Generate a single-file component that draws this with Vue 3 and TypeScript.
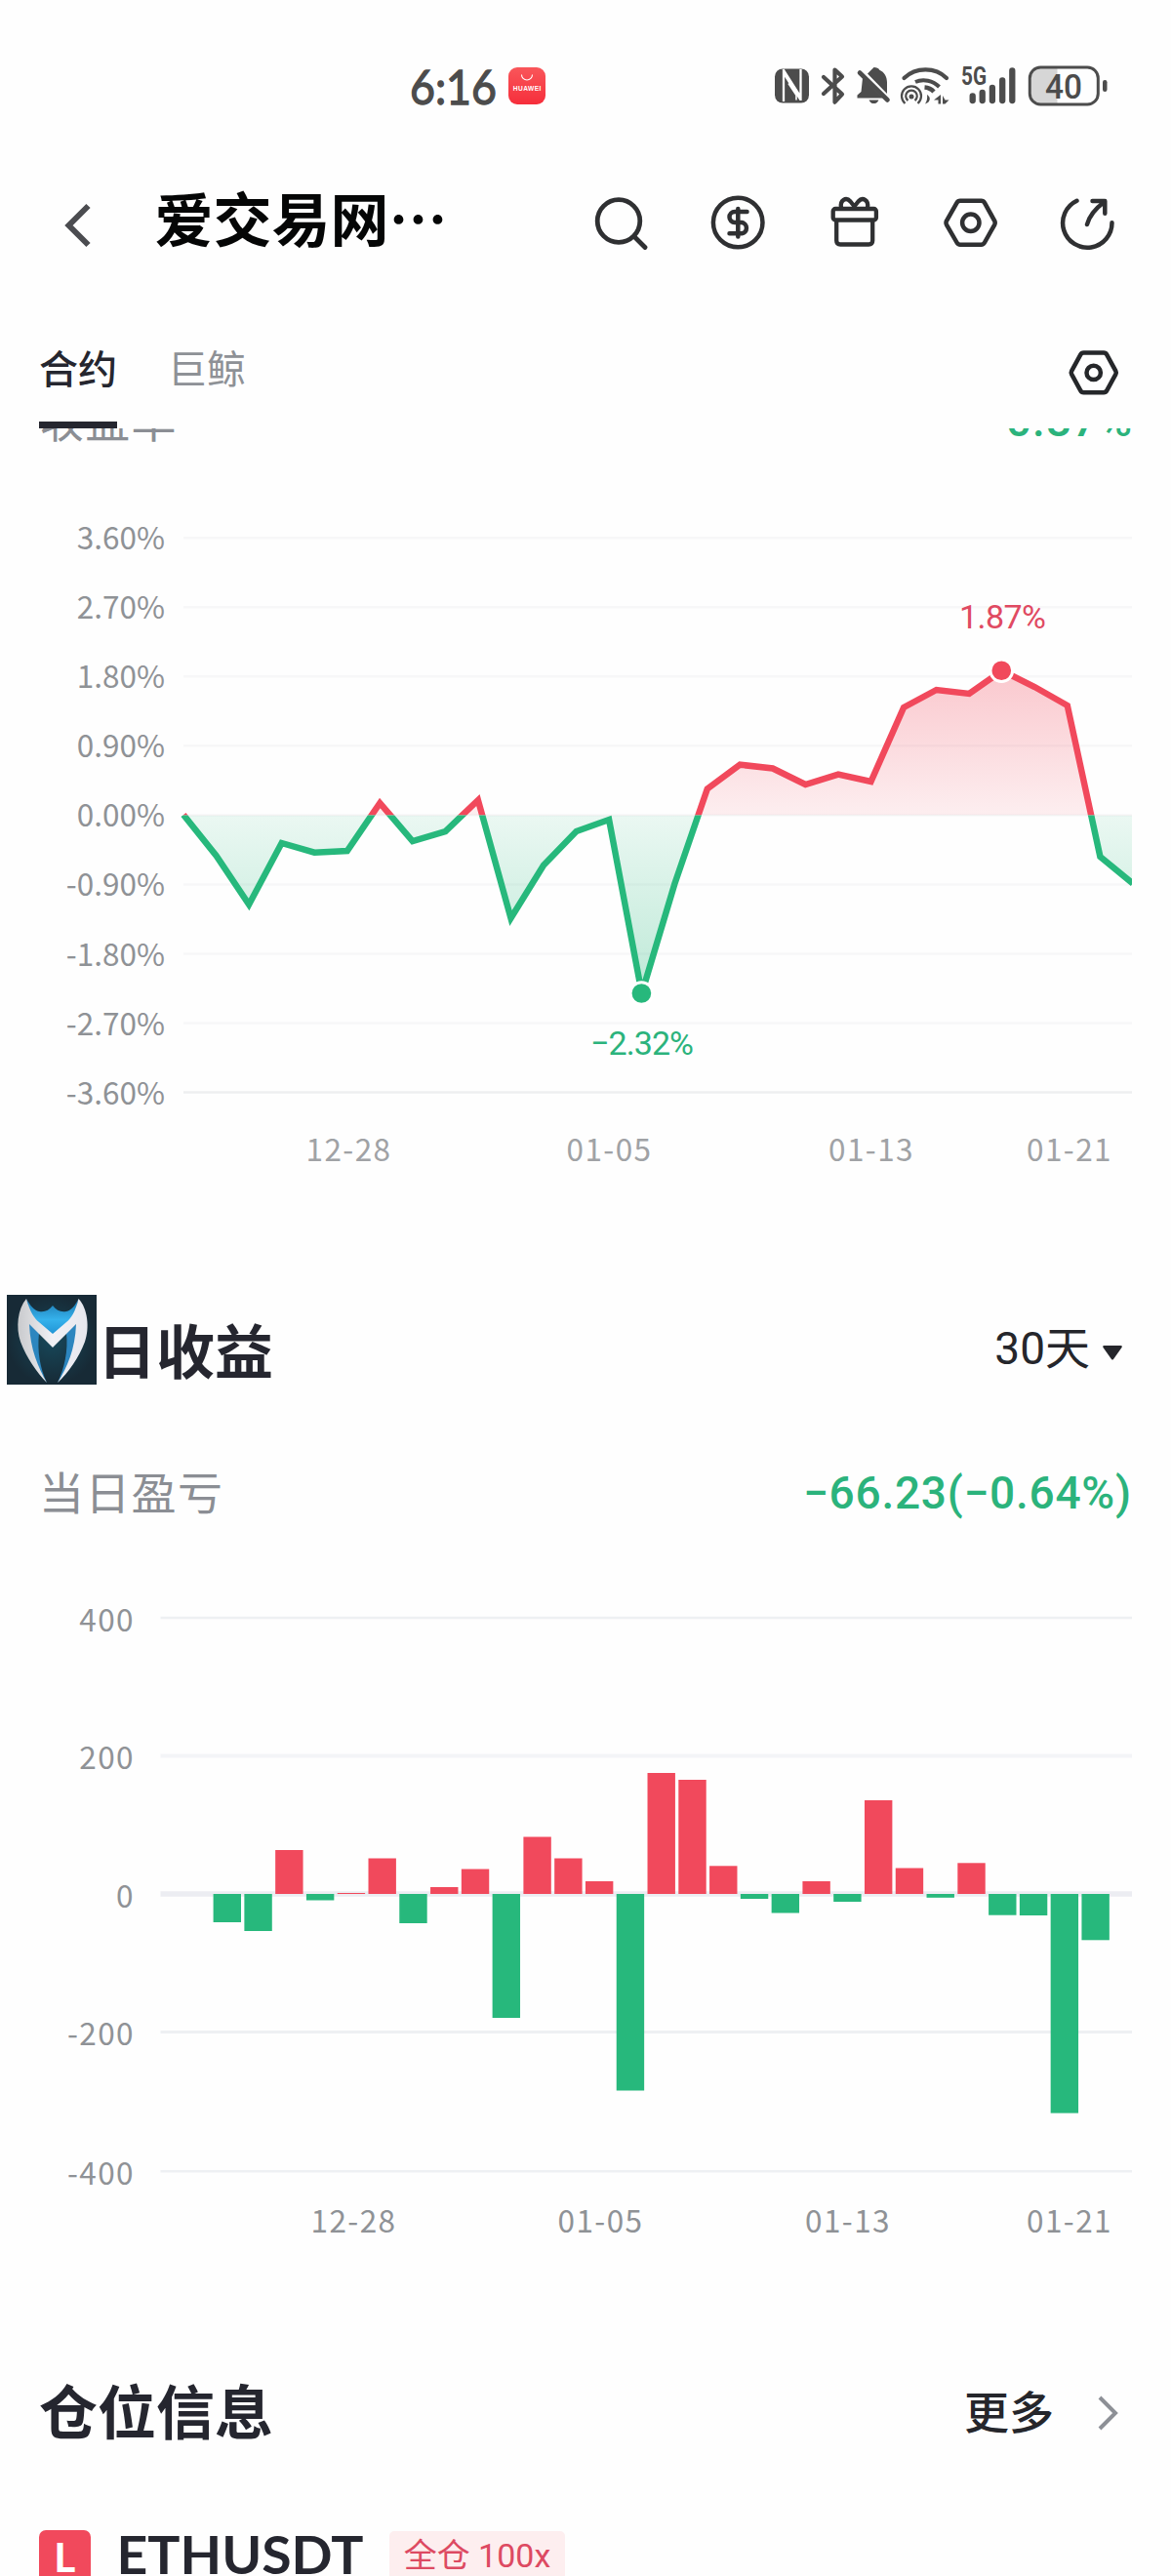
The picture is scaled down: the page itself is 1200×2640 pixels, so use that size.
<script setup lang="ts">
interface Tick { label: string; y: number }
interface DateTick { label: string; x: number }

const RED = '#f1495c'
const GREEN = '#27b87c'

const yieldZero = 835.4
const yieldTicks: Tick[] = ['3.60%', '2.70%', '1.80%', '0.90%', '0.00%', '-0.90%', '-1.80%', '-2.70%', '-3.60%']
  .map((label, i) => ({ label, y: 551.2 + i * 71.05 }))
const yieldDates: DateTick[] = [
  { label: '12-28', x: 357.5 },
  { label: '01-05', x: 624.5 },
  { label: '01-13', x: 893 },
  { label: '01-21', x: 1096 },
]
const yieldY = [835, 877, 927, 864, 873.7, 872, 823, 862, 852, 820, 941, 886.7, 852, 840, 1018, 906,
  808.5, 783.7, 787.5, 804, 793.6, 801, 725, 707, 711, 687.3, 704, 723, 878, 905.5]
const yieldPoints = yieldY.map((y, i) => `${(188 + i * 33.55).toFixed(1)},${y}`).join(' ')
const yieldArea = `188,${yieldZero} ${yieldPoints} 1161,${yieldZero}`

const pnlTicks = [
  { label: '400', y: 1658, w: 2.5, color: '#eef0f3' },
  { label: '200', y: 1799.5, w: 4, color: '#f3f4f7' },
  { label: '0', y: 1941, w: 5.5, color: '#ecedf2' },
  { label: '-200', y: 2082.4, w: 3, color: '#eef0f3' },
  { label: '-400', y: 2225.3, w: 2.5, color: '#eef0f3' },
]
const pnlDates: DateTick[] = [
  { label: '12-28', x: 362.5 },
  { label: '01-05', x: 615.5 },
  { label: '01-13', x: 869 },
  { label: '01-21', x: 1096 },
]
const pnlHeights = [-29, -38, 45, -6.5, 1, 36.5, -30, 7, 25.5, -127, 58.5, 36.5, 13, -201.5, 124, 117,
  28.7, -5, -19.5, 13, -8, 96, 26.5, -3.8, 31.7, -21.7, -22, -224.6, -47.3]
const bars = pnlHeights.map((h, i) => ({
  x: 218.6 + i * 31.78,
  y: h > 0 ? 1941 - h : 1941,
  h: Math.abs(h),
  color: h > 0 ? RED : GREEN,
}))
</script>

<template>
  <div class="page">
    <div class="status">
      <div class="status-left">
        <svg class="clock" width="92" height="50" viewBox="419 63 92 50"><text x="420" y="106.500" textLength="89" lengthAdjust="spacingAndGlyphs" font-family="Lato" font-size="49" fill="#4c4c4c" stroke="#4c4c4c" stroke-width="1.300">6:16</text></svg>
        <svg width="38" height="38" viewBox="0 0 38 38">
          <defs><linearGradient id="hw" x1="0" y1="0" x2="0" y2="1"><stop offset="0" stop-color="#f9565a" /><stop offset="1" stop-color="#f62e3b" /></linearGradient></defs>
          <rect width="38" height="38" rx="9" fill="url(#hw)" />
          <path d="M13.500 7.500a5.500 5.500 0 0 0 11 0" fill="none" stroke="#fff" stroke-width="1.100" />
          <text x="4.800" y="24" textLength="28.500" font-family="Liberation Sans" font-weight="700" font-size="6.600" fill="#fff">HUAWEI</text>
        </svg>
      </div>
      <svg width="350" height="50" viewBox="790 63 350 50">
        <rect x="794" y="70.500" width="35" height="35" rx="8" fill="#4c4c4c" />
        <path d="M803 104V75l17.500 27.500M802.500 71l17.500 27.500M820.500 103V71" fill="none" stroke="#fff" stroke-width="2.300" />
        <path d="M808 85.500l8 12v5" fill="none" stroke="#fff" stroke-width="1.600" />
        <g fill="none" stroke="#4c4c4c" stroke-width="4.200" stroke-linecap="round" stroke-linejoin="round">
          <path d="M844 79l19 17.500-7.500 8.200V71.500l7.500 7-19 17.500" />
        </g>
        <path d="M895.500 69c2.800 0 5 1 5.800 2.800 5 2 7.700 7 7.700 12.500V96L889 75.500zM884 80l21 20.500h-26.500v-3l4-3.500zM890.500 102.500h10c-1 2.500-2.800 3.600-5 3.600s-4-1.100-5-3.600z" fill="#4c4c4c" />
        <path d="M881 74.500l28.500 28" stroke="#4c4c4c" stroke-width="4.600" stroke-linecap="round" />
        <g fill="none" stroke="#4c4c4c" stroke-linecap="round">
          <path d="M926.500 80c12-11.500 32-11.500 43.500 0" stroke-width="4.200" />
          <path d="M938 84c8-3.500 18-1.500 24.500 5" stroke-width="4" stroke-linecap="butt" />
          <path d="M947.500 89.500c4 .3 7 1.800 9.500 4.500" stroke-width="4.500" stroke-linecap="butt" />
          <path d="M927.500 106a10 10 0 1 1 13 0" stroke-width="2.200" stroke-linecap="butt" />
          <path d="M930.500 103a5.800 5.800 0 1 1 7 0" stroke-width="2.200" stroke-linecap="butt" />
        </g>
        <circle cx="934" cy="99" r="2.500" fill="#4c4c4c" />
        <path d="M950 97c3 2 4 5 1 8l-3 1.500c2-3 2.500-6 2-9.500zM964 97v9.500h-2.500v-4h-4.500zM966 98v8.500h2.500l4-4h-4z" fill="#4c4c4c" />
        <text x="985" y="87" textLength="26" lengthAdjust="spacingAndGlyphs" font-family="Roboto" font-weight="700" font-size="25" fill="#4c4c4c">5G</text>
        <g stroke="#4c4c4c" stroke-width="6.300" stroke-linecap="round">
          <path d="M996.700 98.500v4.500M1006.700 95v8M1016.900 90v13M1027.200 82.500v20.500M1037.300 72.500v30.500" />
        </g>
        <path d="M1066 69.500h17.500v37H1066a9 9 0 0 1-9-9v-19a9 9 0 0 1 9-9z" fill="#d6d6d6" />
        <rect x="1055.300" y="69" width="70" height="38" rx="11" fill="none" stroke="#4c4c4c" stroke-width="3" />
        <rect x="1130" y="82" width="4.500" height="12" rx="2.200" fill="#4c4c4c" />
        <text x="1071" y="101" textLength="38" lengthAdjust="spacingAndGlyphs" font-family="Roboto" font-weight="500" font-size="35" fill="#4c4c4c">40</text>
      </svg>
    </div>

    <header class="header">
      <svg class="back" width="28" height="46" viewBox="0 0 28 46"><path d="M24.500 3L4.500 23l20 20" fill="none" stroke="#4b4c50" stroke-width="6" /></svg>
      <h1 class="title">爱交易网…</h1>
      <div class="actions">
        <svg width="60" height="60" viewBox="604 198 60 60"><g fill="none" stroke="#2f3032" stroke-width="4.800" stroke-linecap="round"><circle cx="634" cy="226.500" r="21.800" /><path d="M650.500 243l10.500 10.500" /></g></svg>
        <svg width="60" height="60" viewBox="724 198 60 60"><g fill="none" stroke="#2f3032" stroke-width="4.500" stroke-linecap="round" stroke-linejoin="round"><circle cx="756.200" cy="228" r="25.300" /><path d="M765.500 217h-12.500a5.500 5.500 0 0 0 0 11h7a5.700 5.700 0 0 1 0 11.300h-12.500M756.300 214v28.500" /></g></svg>
        <svg width="60" height="60" viewBox="844 198 60 60"><g fill="none" stroke="#2f3032" stroke-width="4.300" stroke-linejoin="round"><rect x="853.700" y="214" width="44.200" height="11.500" rx="2.500" /><path d="M857.200 225.500v21q0 4 4 4h29q4 0 4-4v-21M862 213c-1.500-8 5-11.500 9.500-6.500l4 5 4-5c4.500-5 11-1.500 9.500 6.500" /></g></svg>
        <svg width="60" height="60" viewBox="964 198 60 60"><g fill="none" stroke="#2f3032" stroke-width="4.500" stroke-linejoin="round"><path d="M984 205.800h21.500q2.300 0 3.500 2l10.200 18.500q1 2 0 4L1009 248.500q-1.200 2.200-3.500 2.200H984q-2.300 0-3.500-2.200l-10.500-18.200q-1-2 0-4l10.500-18.500q1.200-2 3.500-2z" /><circle cx="994.800" cy="228.200" r="8.700" /></g></svg>
        <svg width="60" height="60" viewBox="1084 198 60 60"><g fill="none" stroke="#2f3032" stroke-width="4.500" stroke-linecap="round" stroke-linejoin="round"><path d="M1103.500 205.800a25.200 25.200 0 1 0 36 22.400M1114 230q3.500-12.500 17-22.500M1119.500 206h12.800v12.800" /></g></svg>
      </div>
    </header>

    <nav class="tabs">
      <div class="tab active">合约</div>
      <div class="tab">巨鲸</div>
      <svg class="tab-setting" width="56" height="50" viewBox="1093 357 56 50"><g fill="none" stroke="#25272a" stroke-width="4.500" stroke-linejoin="round"><path d="M1110.500 361.600h20.500q2.200 0 3.300 2l9 16.500q1 1.800 0 3.600l-9 16.500q-1.100 2-3.300 2h-20.500q-2.200 0-3.300-2l-9-16.500q-1-1.800 0-3.600l9-16.500q1.100-2 3.300-2z" /><circle cx="1120.700" cy="381.900" r="7.200" /></g></svg>
    </nav>

    <section class="scroll">
      <div class="row clipped"><span class="muted">收益率</span><span class="value">-0.87%</span></div>
    </section>

    <svg class="chart" width="1200" height="740" viewBox="0 500 1200 740">
      <defs>
        <linearGradient id="gUp" gradientUnits="userSpaceOnUse" x1="0" y1="687" x2="0" y2="835"><stop offset="0" stop-color="#f1495c" stop-opacity=".3" /><stop offset="1" stop-color="#f1495c" stop-opacity=".09" /></linearGradient>
        <linearGradient id="gDown" gradientUnits="userSpaceOnUse" x1="0" y1="835" x2="0" y2="1018"><stop offset="0" stop-color="#27b87c" stop-opacity=".09" /><stop offset="1" stop-color="#27b87c" stop-opacity=".3" /></linearGradient>
        <clipPath id="cUp"><rect x="180" y="600" width="980" height="235.400" /></clipPath>
        <clipPath id="cDown"><rect x="180" y="835.400" width="980" height="260" /></clipPath>
      </defs>
      <g v-for="(t, i) in yieldTicks" :key="t.label">
        <line x1="188" x2="1160" :y1="t.y" :y2="t.y" :stroke="i === 8 ? '#eeeff0' : '#f7f7f8'" stroke-width="2.500" />
        <text class="axis tight" x="169" :y="t.y + 12" text-anchor="end">{{ t.label }}</text>
      </g>
      <g clip-path="url(#cUp)">
        <polygon :points="yieldArea" fill="url(#gUp)" />
        <polyline :points="yieldPoints" fill="none" :stroke="RED" stroke-width="6.500" />
      </g>
      <g clip-path="url(#cDown)">
        <polygon :points="yieldArea" fill="url(#gDown)" />
        <polyline :points="yieldPoints" fill="none" :stroke="GREEN" stroke-width="6.500" />
      </g>
      <circle cx="1026.300" cy="687.300" r="11.300" :fill="RED" stroke="#fff" stroke-width="3" />
      <circle cx="657.400" cy="1018" r="11.300" :fill="GREEN" stroke="#fff" stroke-width="3" />
      <text class="mark" x="983" y="644" textLength="89" fill="#e04a62">1.87%</text>
      <text class="mark" x="605" y="1081" textLength="106" fill="#2bb37c">−2.32%</text>
      <text v-for="d in yieldDates" :key="d.label" class="axis light" :x="d.x" y="1190" text-anchor="middle">{{ d.label }}</text>
    </svg>

    <section class="head">
      <svg class="logo" width="92" height="92" viewBox="0 0 92 92">
        <defs>
          <radialGradient id="lb"><stop offset="0" stop-color="#17485a" /><stop offset="1" stop-color="#172a36" /></radialGradient>
          <linearGradient id="ls" x1="0" y1="0" x2="0" y2="1"><stop offset="0" stop-color="#1b74ac" /><stop offset=".55" stop-color="#35b2ec" /><stop offset="1" stop-color="#1d8fd0" /></linearGradient>
          <linearGradient id="lw" x1="0" y1="0" x2="1" y2="0"><stop offset="0" stop-color="#c9cacd" /><stop offset=".5" stop-color="#f0f1f5" /><stop offset="1" stop-color="#e6e7ee" /></linearGradient>
        </defs>
        <rect width="92" height="92" fill="url(#lb)" />
        <path d="M20 4c4 7 8 12 13 13 6 1 10-1 14-6 4 5 8 7 14 6 5-1 9-6 12.500-13L68 28 47 43 26 28z" fill="url(#ls)" />
        <path d="M22 28l11 11c-2 19 1 36 8 51C31 74 22 55 22 28zM73 28L61 39c2 19-2 36-9 51 12-16 21-35 21-62z" fill="#2c86bf" />
        <path d="M20 4C11 14 9 34 14 48c6 16 17 32 27 42C32 74 24 56 23 30l24 24 24-24c-1 26-9 44-19 60 11-10 22-26 28-42 5-14 3-34-6.500-44C70 18 66 24 61 28L47 40 33 28C28 24 24 18 20 4z" fill="url(#lw)" />
      </svg>
      <h2>日收益</h2>
      <div class="range">30天<svg width="22" height="17" viewBox="0 0 22 17"><path d="M2.500 1h17q2 0 1 2l-8.500 12q-1 1-2 0L1.500 3q-1-2 1-2z" fill="#25262b" /></svg></div>
    </section>

    <div class="row daily"><span class="muted">当日盈亏</span><svg width="340" height="60" viewBox="0 0 340 60"><text class="sum" x="3" y="49" textLength="336">−66.23(−0.64%)</text></svg></div>

    <svg class="chart" width="1200" height="700" viewBox="0 1620 1200 700">
      <g v-for="t in pnlTicks" :key="t.label">
        <line x1="164.500" x2="1160" :y1="t.y" :y2="t.y" :stroke="t.color" :stroke-width="t.w" />
        <text class="axis" x="138" :y="t.y + 13.500" text-anchor="end">{{ t.label }}</text>
      </g>
      <rect v-for="(b, i) in bars" :key="i" :x="b.x" :y="b.y" width="28.400" :height="b.h" :fill="b.color" />
      <text v-for="d in pnlDates" :key="d.label" class="axis" :x="d.x" y="2288" text-anchor="middle">{{ d.label }}</text>
    </svg>

    <section class="head positions">
      <h2>仓位信息</h2>
      <div class="more">更多<svg width="24" height="40" viewBox="0 0 24 40"><path d="M3 4l16 16L3 36" fill="none" stroke="#8d9096" stroke-width="4" /></svg></div>
    </section>

    <div class="position">
      <span class="side">L</span>
      <svg width="254" height="47" viewBox="121 2593 254 47"><text x="119.500" y="2638" textLength="253" lengthAdjust="spacingAndGlyphs" class="symbol">ETHUSDT</text></svg>
      <span class="tag">全仓 100x</span>
    </div>
  </div>
</template>

<style>
body { margin: 0; background: #fefefe; }
</style>

<style scoped>
.page { width: 1200px; height: 2640px; overflow: hidden; background: #fefefe; font-family: "Noto Sans CJK SC", sans-serif; color: #25262f; }
.page svg { display: block; flex: none; }
.page svg.clock { overflow: visible; }
h1, h2 { margin: 0; font-weight: 700; }
.status { height: 176px; box-sizing: border-box; padding: 0 60px 0 419px; display: flex; align-items: center; justify-content: space-between; }
.status-left { display: flex; align-items: center; gap: 10px; }
.header { height: 104px; display: flex; align-items: center; padding: 0 56px 0 66px; }
.back { margin-top: 5px; }
.title { margin-left: 64.5px; padding-bottom: 12px; font-size: 60px; line-height: 90px; color: #050606; white-space: nowrap; }
.actions { margin-left: auto; display: flex; gap: 60px; }
.tabs { height: 159px; display: flex; padding: 0 51px 0 40px; background: #fefefe; }
.tab { box-sizing: border-box; height: 159px; padding-top: 66px; font-size: 40px; line-height: 60px; color: #8e9196; margin-right: 52px; }
.tab.active { color: #25262f; font-weight: 500; border-bottom: 7px solid #25262f; }
.tab-setting { margin: 77px 0 0 auto; }
.scroll { height: 61px; overflow: hidden; }
.row { display: flex; justify-content: space-between; padding: 0 40px; font-size: 46px; line-height: 60px; }
.clipped { margin-top: -41px; }
.muted { color: #8b8e94; letter-spacing: 1.3px; }
.value { font-family: Roboto, sans-serif; font-weight: 500; color: #2bb37c; letter-spacing: 1px; margin-right: -1px; line-height: 66px; }
.axis { font-family: "Noto Sans CJK SC", sans-serif; font-size: 31.5px; letter-spacing: 1.4px; fill: #8f9296; }
.axis.tight { letter-spacing: 0; }
.axis.light { fill: #a0a2a5; }
.mark { font-family: Roboto, sans-serif; font-size: 34px; }
.head { height: 120px; margin-top: 80px; display: flex; align-items: flex-start; padding: 0 40px 0 7px; }
.head h2 { font-size: 60px; line-height: 90px; margin: 17px 0 0 1px; }
.logo { margin-top: 7px; }
.range, .more { margin: 32px 9px 0 auto; display: flex; align-items: center; gap: 12px; font-family: Roboto, "Noto Sans CJK SC", sans-serif; font-size: 46px; line-height: 60px; color: #25262b; }
.range svg { margin-top: 9px; }
.daily { margin-top: 57px; height: 60px; }
.sum { font-family: Roboto, sans-serif; font-size: 46px; font-weight: 500; fill: #2bb37c; }
.daily + .chart { margin-top: 63px; }
.positions { margin-top: 87px; padding-left: 39px; }
.more { margin-right: 12px; font-family: "Noto Sans CJK SC", sans-serif; font-weight: 500; gap: 44px; }
.more svg { margin-top: 8px; }
.position { margin-top: 66px; padding-left: 40px; display: flex; align-items: flex-start; height: 47px; overflow: hidden; }
.side { width: 53px; height: 53px; flex: none; margin-right: 28px; border-radius: 7px; background: #f1495c; color: #fff; font: 700 40px/53px "Noto Sans CJK SC", sans-serif; text-align: center; }
.symbol { font-family: Lato, sans-serif; font-weight: 700; font-size: 54px; fill: #25262f; }
.tag { flex: none; box-sizing: border-box; width: 180px; height: 56px; margin: 1px 0 0 24px; border-radius: 5px; background: #fdeeef; color: #dd4a62; font-family: Roboto, "Noto Sans CJK SC", sans-serif; font-size: 34px; line-height: 50px; text-align: center; white-space: nowrap; }
</style>
